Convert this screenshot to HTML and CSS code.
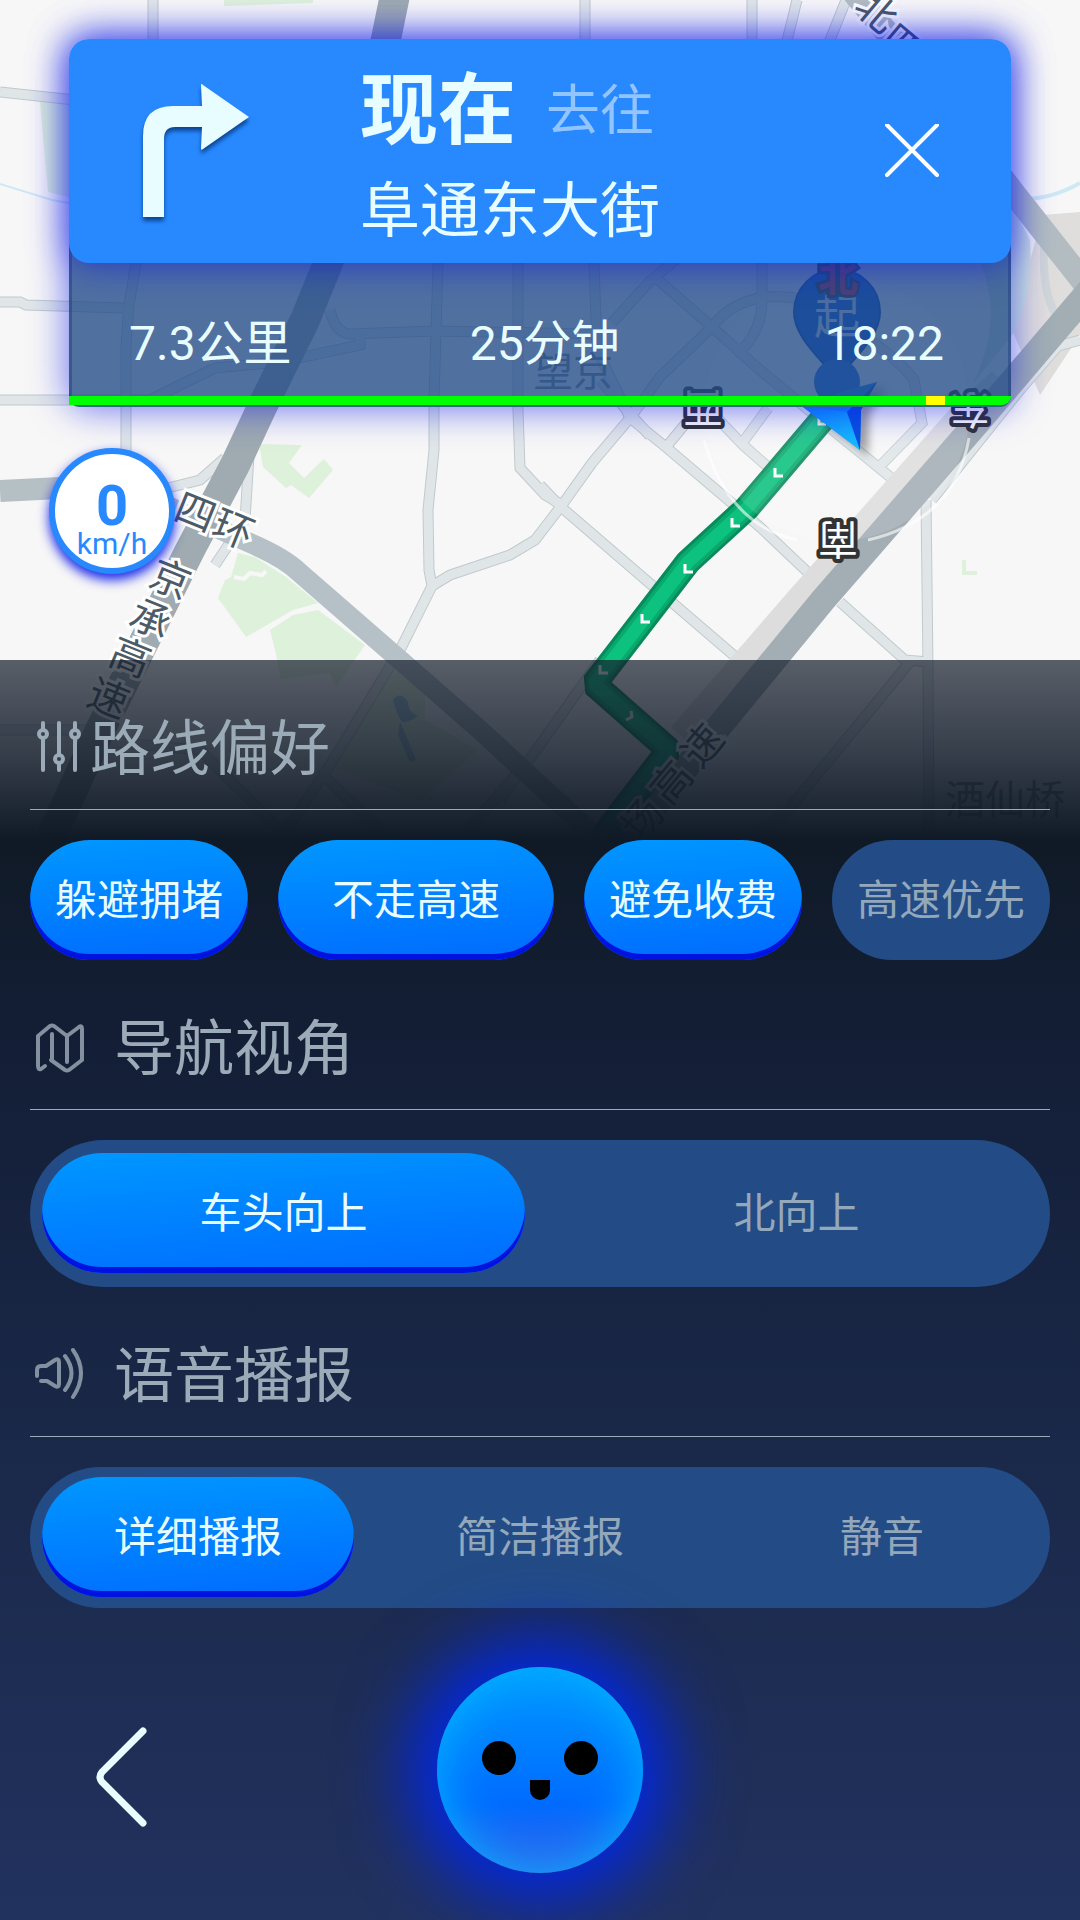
FILE: index.html
```html
<!DOCTYPE html>
<html lang="zh-CN">
<head>
  <meta charset="UTF-8">
  <meta name="viewport" content="width=device-width, initial-scale=1.0">
  <title>导航</title>
  <link rel="stylesheet" href="styles.css">
</head>
<body>
  <svg class="map" viewBox="0 0 1080 860" preserveAspectRatio="xMidYMin slice" aria-hidden="true">
    <defs>
      <g id="roads">
        <path d="M153 0V60L136 263 129 305 126 345 126 470"/>
        <path d="M0 92L75 100"/>
        <path d="M0 302H20L26 305 124 308"/>
        <path d="M0 400H150L180 385 215 368 280 362 360 345V338"/>
        <path d="M330 310Q335 333 350 334L434 331 597 334"/>
        <path d="M438 263L434 400 434 450 428 510 429 570 432 586 400 650 330 765 280 840"/>
        <path d="M518 263V410L520 468 545 495 562 505"/>
        <path d="M432 586L450 575 510 555 535 540 562 505 592 463 630 418 660 377 712 327 655 277"/>
        <path d="M585 0V40M752 0V50M797 0L786 45M846 0L828 45M594 263L597 350 630 418"/>
        <path d="M540 485L561 507 654 587 745 665"/>
        <path d="M630 418L667 448 760 527 818 582"/>
        <path d="M600 380L650 436M612 323L650 281 700 240M691 417L667 446M700 400L743 445 768 467"/>
        <path d="M712 327L760 370 829 427 900 485M768 408L743 442"/>
        <path d="M712 327C740 290 790 290 830 310C870 340 900 360 914 380L922 423 881 465"/>
        <path d="M762 263V300C762 330 745 350 735 352"/>
        <path d="M926 500L928 667 929 840"/>
        <path d="M840 602L905 660 928 662M910 662L788 810 740 850"/>
        <path d="M600 660L540 745 500 800M0 730H90M90 740L200 750 300 850M320 772L400 850M520 770L460 840"/>
        <path d="M1080 340L1058 346 1020 390 932 500"/>
        <path d="M160 490L200 480 225 458M250 440L245 520 215 565"/>
      </g>
      <linearGradient id="cursorFill" x1="0" y1="0" x2="1" y2="1">
        <stop offset="0" stop-color="#1488ff"/>
        <stop offset="1" stop-color="#16c0ff"/>
      </linearGradient>
    </defs>

    <rect width="1080" height="860" fill="#f7f7f7"/>

    <!-- parks -->
    <g fill="#def1da">
      <path d="M224 0H313V3L224 6Z"/>
      <path d="M40 102H80V200L48 192Z"/>
      <path d="M259 444L302 445 289 463 304 478 324 459 333 470 309 498 291 485 286 488 263 467Z"/>
      <path d="M238 553L255 557 286 577 318 603 293 610 246 637 218 598 225 580 231 577Z"/>
      <path d="M270 630L293 615 318 610 365 645 336 687 330 673 281 679 275 650Z"/>
      <path d="M396 670L425 693V720L478 750 420 800 327 765 375 700Z"/>
      <path d="M962 560H966V571H977V575H962Z"/>
      <path d="M940 420L946 425 900 480 895 474Z"/>
    </g>
    <path d="M1042 215L1080 212V335L1040 395 1012 330Z" fill="#e0dedc"/>
    <path d="M980 263L1012 205 1030 240Q1034 300 1012 335L972 385Q1005 320 980 263Z" fill="#d3e6dc"/>
    <g fill="none" stroke="#cfe8f5">
      <path d="M0 184L52 200 75 204" stroke-width="2"/>
      <path d="M1020 199Q1050 200 1080 183" stroke-width="4"/>
    </g>
    <path d="M393 700Q400 690 408 702Q408 712 418 716Q410 722 402 722Q396 712 393 700ZM400 722L408 740 416 760 410 762 398 735Z" fill="#8ab4e0" opacity=".7"/>
    <path d="M234 577L244 579 250 573 262 575 266 571" fill="none" stroke="#f7f7f7" stroke-width="4"/>

    <!-- streets -->
    <use href="#roads" fill="none" stroke="#c0cacd" stroke-width="11"/>
    <use href="#roads" fill="none" stroke="#e0e6e8" stroke-width="9"/>

    <!-- ring roads and motorways -->
    <g fill="none" stroke-linejoin="round">
      <path d="M0 491L60 488" stroke="#b5c0c5" stroke-width="22"/>
      <path d="M150 498L250 543Q285 558 300 573L400 660 480 730 610 850" stroke="#b5c0c7" stroke-width="20"/>
      <path d="M395 -5L386 39 328 263 305 320 263 405 235 465 190 550 150 630 100 730 50 840" stroke="#9fabb0" stroke-width="30"/>
      <path d="M1046 230Q1038 290 1060 322" stroke="#d0d6d8" stroke-width="8"/>
      <path d="M850 -12L935 90 1015 195 1090 290" stroke="#b3bdc1" stroke-width="24"/>
      <path d="M1000 380L960 416 797 600 680 735" stroke="#dedddd" stroke-width="24"/>
      <path d="M1090 290L976 424 823 600 708 740 620 850" stroke="#a2aeb4" stroke-width="26"/>
    </g>

    <!-- planned route -->
    <g fill="none" stroke-linejoin="bevel">
      <path d="M826 415L747 508 688 562 594 684 669 750 600 840" stroke="#078a5c" stroke-width="26"/>
      <path d="M826 415L747 508 688 562 594 684 669 750 600 840" stroke="#09a96d" stroke-width="20"/>
      <path d="M826 415L747 508 688 562 594 684 669 750 600 840" stroke="#0cc27e" stroke-width="13"/>
    </g>
    <g fill="none" stroke="#fff" stroke-width="3">
      <path d="M819 418V424H826"/>
      <path d="M775 468V476H783"/>
      <path d="M732 518V526H740"/>
      <path d="M685 564V572H693"/>
      <path d="M642 614V622H650"/>
      <path d="M600 665V673H608"/>
      <path d="M631 711L632 717 626 720"/>
    </g>

    <!-- compass disc -->
    <circle cx="837" cy="408" r="133" fill="#fff" opacity=".12"/>
    <path d="M704 440Q728 525 797 540M868 540Q955 520 969 438" fill="none" stroke="#fff" stroke-width="3" opacity=".6"/>
    <g class="compass">
      <text transform="translate(838 538) rotate(180)">南</text>
      <text transform="translate(703 407) rotate(180)">西</text>
      <text transform="translate(970 408) rotate(180)">东</text>
    </g>

    <!-- start pin and position cursor -->
    <path d="M837 384C832 366 794 342 794 312A43 43 0 0 1 880 312C880 342 842 366 837 384Z" fill="#0a5ee0" stroke="#0a48b8" stroke-width="2"/>
    <circle cx="837" cy="382" r="23" fill="#1c6fe8"/>
    <text x="837" y="317" class="pin">起</text>
    <text x="838" y="277" class="north">北</text>
    <path d="M803 407L847 390 877 382 861 410 860 450Z" fill="#1488ff" class="cursor"/>
    <path d="M803 407L847 412 860 450Z" fill="url(#cursorFill)"/>
    <path d="M847 412L877 382 861 410 860 450Z" fill="#0a50e0"/>

    <g class="road-name">
      <text transform="translate(876 12) rotate(40)">北</text>
      <text transform="translate(902 46) rotate(40)">四</text>
      <text transform="translate(195 513) rotate(22)">四</text>
      <text transform="translate(233 530) rotate(22)">环</text>
      <text transform="translate(170 580) rotate(22)">京</text>
      <text transform="translate(150 620) rotate(22)">承</text>
      <text transform="translate(130 658) rotate(22)">高</text>
      <text transform="translate(108 699) rotate(22)">速</text>
      <text transform="translate(703 746) rotate(-50)">速</text>
      <text transform="translate(672 783) rotate(-50)">高</text>
      <text transform="translate(643 820) rotate(-50)">场</text>
    </g>
    <g class="place">
      <text x="573" y="372">望京</text>
      <text x="1005" y="800">酒仙桥</text>
    </g>
  </svg>

  <div class="screen">
    <header class="top">
      <section class="guide">
        <div class="turn">
          <svg class="turn-arrow" viewBox="0 0 106 134" aria-hidden="true">
            <path d="M0 133V52Q0 22 30 22H59L58 1Q58 -1 60 1L106 33 60 65Q58 67 58 64L59 43H32Q21 43 21 55V133Z" fill="#e8fdff"/>
          </svg>
          <div class="turn-text">
            <div class="when"><strong>现在</strong><span>去往</span></div>
            <div class="street">阜通东大街</div>
          </div>
          <button class="close" aria-label="关闭">
            <svg viewBox="0 0 54 54" aria-hidden="true"><path d="M2 1L52 51M52 1L2 51"/></svg>
          </button>
        </div>
        <div class="trip">
          <span>7.3公里</span>
          <span>25分钟</span>
          <span>18:22</span>
        </div>
        <div class="traffic"><i class="clear"></i><i class="slow"></i><i class="clear end"></i></div>
      </section>
      <div class="speed"><b>0</b><span>km/h</span></div>
    </header>

    <main class="sheet">
      <h2 class="title tight">
        <svg viewBox="0 0 60 60" aria-hidden="true">
          <path d="M13 6V12M13 21V53M29 6V38M29 47V53M45 6V12M45 21V53"/>
          <circle cx="13" cy="17" r="4"/><circle cx="29" cy="42" r="4"/><circle cx="45" cy="17" r="4"/>
        </svg>路线偏好
      </h2>
      <div class="pills">
        <button class="pill on" aria-pressed="true">躲避拥堵</button>
        <button class="pill on wide" aria-pressed="true">不走高速</button>
        <button class="pill on" aria-pressed="true">避免收费</button>
        <button class="pill" aria-pressed="false">高速优先</button>
      </div>

      <h2 class="title">
        <svg class="dim" viewBox="0 0 60 60" aria-hidden="true">
          <path d="M15 49L11 52Q8 53 8 49V19L20 9Q22 8 24 9L37 19 49 10Q52 8 52 12V43L39 53Q37 54 35 53L21 43M22 17V42M37 20V45"/>
        </svg>导航视角
      </h2>
      <div class="segment tall">
        <label><input type="radio" name="view" checked><span>车头向上</span></label>
        <label><input type="radio" name="view"><span>北向上</span></label>
      </div>

      <h2 class="title">
        <svg class="dim" viewBox="0 0 60 60" aria-hidden="true">
          <path d="M7 32V26Q7 22 11 22H16L25 16Q29 14 29 18V40Q29 44 25 42L17 37H11M35 12Q48 29 35 46M43 6Q59 29 43 53"/>
        </svg>语音播报
      </h2>
      <div class="segment">
        <label><input type="radio" name="voice" checked><span>详细播报</span></label>
        <label><input type="radio" name="voice"><span>简洁播报</span></label>
        <label><input type="radio" name="voice"><span>静音</span></label>
      </div>

      <footer class="bottom">
        <button class="back" aria-label="返回">
          <svg viewBox="0 0 52 102" aria-hidden="true"><path d="M47 5L6 46Q2 51 6 56L47 97"/></svg>
        </button>
        <button class="robot" aria-label="语音助手">
          <svg viewBox="0 0 206 206" aria-hidden="true">
            <circle cx="62" cy="91" r="17"/>
            <circle cx="144" cy="91" r="17"/>
            <path d="M93 113H113V123A10 10 0 0 1 93 123Z"/>
          </svg>
        </button>
      </footer>
    </main>
  </div>
</body>
</html>
```

FILE: styles.css
```css
* { box-sizing: border-box; }
body { margin: 0; background: #f7f7f7; color: #e8fdff; font-family: Roboto, "Noto Sans CJK SC", sans-serif; }
button { border: 0; padding: 0; background: none; color: inherit; font: inherit; cursor: pointer; }

/* map */
.map { position: absolute; top: 0; left: 0; width: 100%; height: 860px; }
.map text { text-anchor: middle; dominant-baseline: central; }
.compass text { font-size: 40px; fill: #fff; stroke: #333; stroke-width: 8px; paint-order: stroke; stroke-linejoin: round; }
.map .north { font-size: 40px; font-weight: 700; fill: #e02040; stroke: #333; stroke-width: 6px; paint-order: stroke; }
.pin { font-size: 46px; fill: #dfe8f5; }
.cursor { filter: drop-shadow(8px 6px 4px rgba(0, 0, 0, .35)); }
.road-name { font-size: 40px; fill: #4d5b66; stroke: #fff; stroke-width: 6px; }
.road-name text { paint-order: stroke; }
.place { font-size: 40px; fill: #7b8a96; }

.screen { position: relative; min-height: 100vh; display: flex; flex-direction: column; }

/* guide card */
.top { padding: 39px 69px 86px; }
.guide { border-radius: 20px; box-shadow: 0 0 36px 2px rgba(0, 16, 230, .56); }
.turn { display: flex; align-items: center; height: 224px; padding: 0 72px 0 74px; border-radius: 20px; background: #2889ff; box-shadow: 0 0 36px 2px rgba(0, 16, 230, .56); position: relative; }
.turn-arrow { width: 106px; height: 134px; overflow: visible; filter: drop-shadow(0 4px 2px rgba(0, 40, 100, .7)); }
.turn-text { flex: 1; padding: 22px 0 0 111px; }
.when { display: flex; align-items: center; gap: 30px; line-height: 100px; }
.when strong { font-size: 78px; }
.when span { font-size: 54px; color: #92c4ff; }
.street { font-size: 60px; line-height: 100px; }
.close { width: 54px; height: 54px; }
.close svg { display: block; fill: none; stroke: #fff; stroke-width: 4; stroke-linecap: round; }
.trip { display: grid; grid-template-columns: 36% 30% 34%; margin-top: -20px; padding: 71px 64px 22px 57px; background: rgba(33, 74, 136, .78); border: solid rgba(33, 64, 130, .5); border-width: 0 3px; font-size: 48px; line-height: 60px; }
.trip span:nth-child(2) { text-align: center; }
.trip span:nth-child(3) { text-align: right; }
.traffic { display: flex; height: 11px; border-bottom: 2px solid #2b6b7a; border-radius: 0 0 20px 20px; }
.clear { flex: 91; background: #00ff00; }
.slow { flex: 2; background: #ffff00; }
.clear.end { flex: 7; border-bottom-right-radius: 9px; }

.speed { display: flex; flex-direction: column; align-items: center; width: 126px; height: 126px; margin: 41px 0 0 -20px; padding-top: 28px; border: 6px solid #2889ff; border-radius: 50%; background: #fff; color: #2889ff; box-shadow: 0 6px 12px rgba(0, 16, 230, .9); }
.speed b { font-size: 56px; line-height: 48px; }
.speed span { font-size: 30px; line-height: 28px; }

/* settings sheet */
.sheet { flex: 1; padding: 0 30px; background: linear-gradient(rgba(20, 29, 43, .7), rgba(18, 28, 42, .84) 90px, rgba(16, 26, 38, 1) 180px, #131e35 360px, #1a2849 790px, #22325f); }
.title { display: flex; align-items: center; gap: 24px; height: 150px; margin: 0 0 30px; padding-top: 17px; border-bottom: 1px solid #9cabb8; color: #9cabb8; font-size: 60px; font-weight: 400; }
.title.tight { gap: 0; }
.title svg { width: 60px; height: 60px; margin-top: 8px; fill: none; stroke: #9cabb8; stroke-width: 4; stroke-linecap: round; stroke-linejoin: round; }
.title .dim { stroke: #83909f; }

.pills { display: flex; gap: 30px; }
.pill { height: 120px; padding: 0 25px 8px; border-radius: 60px; background: #234c86; color: #93a8ba; font-size: 42px; }
.pill.wide { flex: 1; }
.pill.on,
.segment input:checked + span { background: linear-gradient(175deg, #0095ff 5%, #006fff 90%); color: #e8fdff; box-shadow: inset 0 -6px 0 #0012e0; }

.segment { display: flex; gap: 30px; padding: 10px 12px 11px; border-radius: 74px; background: #234c86; }
.segment.tall { padding: 13px 12px 14px; }
.segment label { flex: 1; cursor: pointer; }
.segment input { position: absolute; opacity: 0; }
.segment span { display: flex; align-items: center; justify-content: center; height: 120px; padding-bottom: 8px; border-radius: 60px; color: #93a8ba; font-size: 42px; }

.bottom { display: grid; grid-template-columns: 1fr auto 1fr; align-items: center; padding: 59px 0 47px; }
.back { justify-self: start; width: 52px; height: 102px; margin: 14px 0 0 66px; }
.back svg { display: block; fill: none; stroke: #e8fdff; stroke-width: 7; stroke-linecap: round; }
.robot { width: 206px; height: 206px; border-radius: 50%; background: linear-gradient(#0099ff, #006cff 66%, #3a5fe8); box-shadow: 0 0 70px 28px #0028e8, inset 0 0 50px #00b4ff; }
.robot svg { display: block; }
```
